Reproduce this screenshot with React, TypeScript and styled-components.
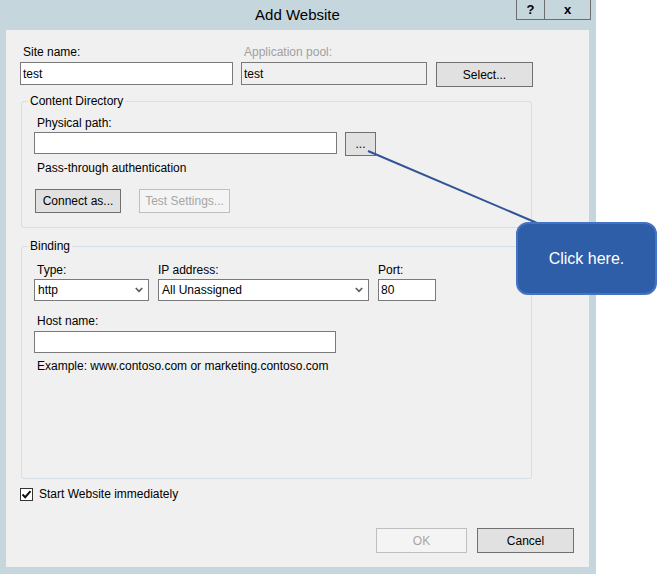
import styled, { createGlobalStyle } from "styled-components";

const GlobalStyle = createGlobalStyle`
  html, body {
    margin: 0;
    padding: 0;
    background: #ffffff;
  }
  body {
    font-family: "Liberation Sans", Arial, sans-serif;
    font-size: 12px;
    color: #000000;
  }
`;

const ChevronIcon = () => (
  <svg width="8" height="6" viewBox="0 0 8 6">
    <polyline points="0.8,1 4,4.4 7.2,1" fill="none" stroke="#5a5a5a" strokeWidth="1.6" />
  </svg>
);

const CheckIcon = () => (
  <svg width="11" height="11" viewBox="0 0 11 11">
    <polyline points="1.5,5.5 4.2,8.2 9.5,2.2" fill="none" stroke="#111" strokeWidth="2" />
  </svg>
);

const App = () => {
  return (
    <Pub.Page>
      <GlobalStyle />
      <Pub.Frame>
        <Pub.TitleBar>
          <span />
          <Pub.Title>Add Website</Pub.Title>
          <Pub.TitleButtons>
            <Pub.TitleButton $width={29}>?</Pub.TitleButton>
            <Pub.TitleButton $width={46}>x</Pub.TitleButton>
          </Pub.TitleButtons>
        </Pub.TitleBar>

        <Pub.Content>
          <Pub.TopGrid>
            <Pub.Label $indent={3}>Site name:</Pub.Label>
            <Pub.Label $indent={3} $muted>
              Application pool:
            </Pub.Label>
            <span />
            <Pub.TextBox $width={213} $height={23} defaultValue="test" readOnly />
            <Pub.TextBox $width={186} $height={23} $readonlyBg defaultValue="test" readOnly />
            <Pub.Button $width={97} $height={25}>Select...</Pub.Button>
          </Pub.TopGrid>

          <Pub.Group>
            <Pub.Legend>Content Directory</Pub.Legend>
            <Pub.GroupBody>
              <Pub.Label $indent={3}>Physical path:</Pub.Label>
              <Pub.PathRow>
                <Pub.TextBox $width={303} $height={22} readOnly />
                <Pub.Button $width={31} $height={24}>...</Pub.Button>
              </Pub.PathRow>
              <Pub.Label $indent={3} $top={4}>Pass-through authentication</Pub.Label>
              <Pub.ButtonRow>
                <Pub.Button $width={86} $height={24}>Connect as...</Pub.Button>
                <Pub.Button $width={91} $height={24} disabled>
                  Test Settings...
                </Pub.Button>
              </Pub.ButtonRow>
            </Pub.GroupBody>
          </Pub.Group>

          <Pub.Group $gap={10}>
            <Pub.Legend>Binding</Pub.Legend>
            <Pub.BindingBody>
              <Pub.FieldRow>
                <Pub.Field $width={115}>
                  <Pub.Label $indent={3}>Type:</Pub.Label>
                  <Pub.Dropdown>
                    <span>http</span>
                    <ChevronIcon />
                  </Pub.Dropdown>
                </Pub.Field>
                <Pub.Field $width={211}>
                  <Pub.Label>IP address:</Pub.Label>
                  <Pub.Dropdown>
                    <span>All Unassigned</span>
                    <ChevronIcon />
                  </Pub.Dropdown>
                </Pub.Field>
                <Pub.Field $width={58}>
                  <Pub.Label>Port:</Pub.Label>
                  <Pub.TextBox $width={58} $height={22} defaultValue="80" readOnly />
                </Pub.Field>
              </Pub.FieldRow>
              <Pub.Label $indent={3} $top={12}>Host name:</Pub.Label>
              <Pub.TextBox $width={302} $height={22} $top={2} readOnly />
              <Pub.Label $indent={3} $top={5}>
                Example: www.contoso.com or marketing.contoso.com
              </Pub.Label>
            </Pub.BindingBody>
          </Pub.Group>

          <Pub.CheckRow>
            <Pub.CheckBox>
              <CheckIcon />
            </Pub.CheckBox>
            <span>Start Website immediately</span>
          </Pub.CheckRow>

          <Pub.Footer>
            <Pub.Button $width={91} $height={25} disabled>
              OK
            </Pub.Button>
            <Pub.Button $width={97} $height={25}>Cancel</Pub.Button>
          </Pub.Footer>
        </Pub.Content>
      </Pub.Frame>

      {/* callout pointing at the browse button */}
      <Pub.Connector width="668" height="574" viewBox="0 0 668 574">
        <line x1="368" y1="151" x2="537" y2="223" stroke="#2f5597" strokeWidth="2" />
      </Pub.Connector>
      <Pub.Callout>Click here.</Pub.Callout>
    </Pub.Page>
  );
};

export default App;

const Pub = {
  Page: styled.div`
    position: relative;
    width: 668px;
    height: 574px;
    overflow: hidden;
    background: #ffffff;
  `,

  Frame: styled.div`
    width: 596px;
    height: 574px;
    box-sizing: border-box;
    padding: 0 7px 7px 6px;
    background: #c5d7dd;
    display: flex;
    flex-direction: column;
  `,

  TitleBar: styled.div`
    height: 30px;
    flex-shrink: 0;
    display: grid;
    grid-template-columns: 1fr auto 1fr;
    align-items: start;
  `,

  Title: styled.div`
    font-size: 15px;
    line-height: 30px;
    color: #000;
  `,

  TitleButtons: styled.div`
    justify-self: end;
    margin-right: -2px;
    display: flex;
  `,

  TitleButton: styled.div<{ $width: number }>`
    width: ${(p) => p.$width}px;
    height: 20px;
    box-sizing: border-box;
    border: 1px solid #6d6d6d;
    border-top: none;
    & + & {
      border-left: none;
    }
    display: flex;
    align-items: center;
    justify-content: center;
    font-size: 13px;
    font-weight: bold;
    color: #000;
  `,

  Content: styled.div`
    flex: 1;
    background: #f0f0f0;
    box-sizing: border-box;
    padding: 14px 15px 14px 14px;
    display: flex;
    flex-direction: column;
  `,

  TopGrid: styled.div`
    display: grid;
    grid-template-columns: 213px 186px 97px;
    grid-template-rows: 16px auto;
    column-gap: 8px;
    row-gap: 2px;
    align-items: start;

    & > button {
      margin-left: 1px;
    }
  `,

  Label: styled.div<{ $muted?: boolean; $indent?: number; $top?: number }>`
    font-size: 12px;
    line-height: 16px;
    height: 16px;
    white-space: nowrap;
    color: ${(p) => (p.$muted ? "#a0a0a0" : "#000")};
    padding-left: ${(p) => p.$indent ?? 0}px;
    margin-top: ${(p) => p.$top ?? 0}px;
  `,

  TextBox: styled.input<{ $width: number; $height: number; $readonlyBg?: boolean; $top?: number }>`
    display: block;
    width: ${(p) => p.$width}px;
    height: ${(p) => p.$height}px;
    margin: ${(p) => p.$top ?? 0}px 0 0 0;
    box-sizing: border-box;
    border: 1px solid #7a7a7a;
    background: ${(p) => (p.$readonlyBg ? "#f0f0f0" : "#ffffff")};
    padding: 0 2px;
    font-family: "Liberation Sans", Arial, sans-serif;
    font-size: 12px;
    color: #000;
    outline: none;
  `,

  Button: styled.button<{ $width: number; $height: number }>`
    width: ${(p) => p.$width}px;
    height: ${(p) => p.$height}px;
    box-sizing: border-box;
    padding: 0;
    border: 1px solid #707070;
    background: #e1e1e1;
    font-family: "Liberation Sans", Arial, sans-serif;
    font-size: 12px;
    color: #000;

    &:disabled {
      border-color: #bfbfbf;
      background: #f4f4f4;
      color: #a6a6a6;
    }
  `,

  Group: styled.fieldset<{ $gap?: number }>`
    width: 511px;
    min-width: 0;
    box-sizing: border-box;
    margin: ${(p) => p.$gap ?? 6}px 0 0 1px;
    padding: 0;
    border: 1px solid #d5dfe5;
    border-radius: 3px;
  `,

  Legend: styled.legend`
    margin-left: 6px;
    padding: 0 2px;
    font-size: 12px;
    line-height: 16px;
    color: #000;
  `,

  GroupBody: styled.div`
    padding: 6px 14px 14px 12px;
  `,

  PathRow: styled.div`
    display: flex;
    align-items: flex-start;
    gap: 8px;
    margin-top: 1px;
  `,

  ButtonRow: styled.div`
    display: flex;
    gap: 18px;
    margin-top: 13px;
    padding-left: 1px;
  `,

  BindingBody: styled.div`
    padding: 8px 14px 104px 12px;
  `,

  FieldRow: styled.div`
    display: flex;
    gap: 9px;
  `,

  Field: styled.div<{ $width: number }>`
    width: ${(p) => p.$width}px;
    display: flex;
    flex-direction: column;
    gap: 1px;
  `,

  Dropdown: styled.div`
    height: 22px;
    box-sizing: border-box;
    border: 1px solid #7a7a7a;
    background: #ffffff;
    display: flex;
    align-items: center;
    justify-content: space-between;
    padding: 0 5px 0 3px;
    font-size: 12px;
  `,

  CheckRow: styled.div`
    display: flex;
    align-items: center;
    gap: 6px;
    margin-top: 7px;
    height: 16px;
    font-size: 12px;
  `,

  CheckBox: styled.div`
    width: 13px;
    height: 13px;
    box-sizing: border-box;
    border: 1px solid #333333;
    background: #ffffff;
    display: flex;
    align-items: center;
    justify-content: center;
  `,

  Footer: styled.div`
    margin-top: auto;
    display: flex;
    justify-content: flex-end;
    gap: 10px;
  `,

  Connector: styled.svg`
    position: absolute;
    left: 0;
    top: 0;
    pointer-events: none;
  `,

  Callout: styled.div`
    position: absolute;
    left: 516px;
    top: 222px;
    width: 141px;
    height: 73px;
    box-sizing: border-box;
    border: 2px solid #4472c4;
    border-radius: 12px;
    background: #2e5ea8;
    color: #ffffff;
    font-family: "Liberation Sans", Arial, sans-serif;
    font-size: 16px;
    display: flex;
    align-items: center;
    justify-content: center;
  `,
};
